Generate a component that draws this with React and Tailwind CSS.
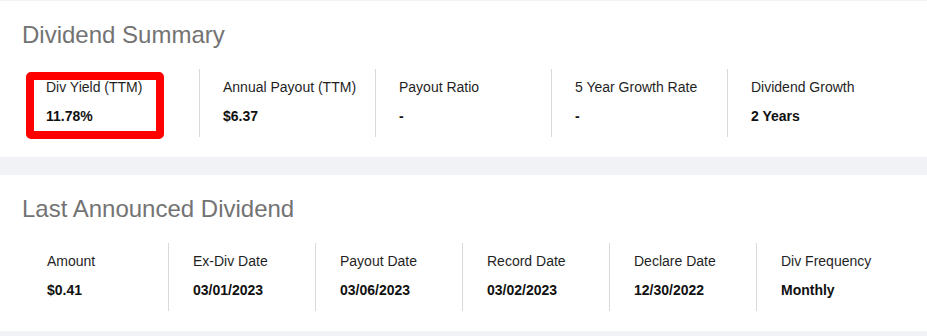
const summary = [
  { label: "Div Yield (TTM)", value: "11.78%", marked: true },
  { label: "Annual Payout (TTM)", value: "$6.37" },
  { label: "Payout Ratio", value: "-" },
  { label: "5 Year Growth Rate", value: "-" },
  { label: "Dividend Growth", value: "2 Years" },
];

const announced = [
  { label: "Amount", value: "$0.41" },
  { label: "Ex-Div Date", value: "03/01/2023" },
  { label: "Payout Date", value: "03/06/2023" },
  { label: "Record Date", value: "03/02/2023" },
  { label: "Declare Date", value: "12/30/2022" },
  { label: "Div Frequency", value: "Monthly" },
];

function Stat({ label, value, first, marked, pad }) {
  return (
    <div
      className={
        "relative h-[68px] pt-[8px] " +
        pad +
        (first ? "" : " border-l border-[#dadada]")
      }
    >
      {marked && (
        <div className="pointer-events-none absolute left-[3px] top-[3px] h-[67px] w-[138px] rounded-[5px] border-[8px] border-[#ff0000]" />
      )}
      <div className="text-[14px] leading-5 text-[#1f1f1f]">{label}</div>
      <div className="mt-[9px] text-[14px] font-bold leading-5 text-[#111]">{value}</div>
    </div>
  );
}

function Card({ title, children }) {
  return (
    <section className="bg-white pt-[18px] pb-[20px]">
      <h2 className="px-[22px] text-[24px] leading-8 text-[#737373]">{title}</h2>
      {children}
    </section>
  );
}

export default function App() {
  return (
    <div
      className="flex min-h-[336px] flex-col gap-[18px] bg-[#f1f2f6] pt-px pb-[5px]"
      style={{ fontFamily: '"Liberation Sans", Arial, sans-serif' }}
    >
      <Card title="Dividend Summary">
        <div className="mt-[18px] grid grid-cols-5 pl-[23px] pr-[24px]">
          {summary.map((s, i) => (
            <Stat key={s.label} {...s} first={i === 0} pad="pl-[23px]" />
          ))}
        </div>
      </Card>
      <Card title="Last Announced Dividend">
        <div className="mt-[18px] grid grid-cols-6 pl-[21px] pr-[24px]">
          {announced.map((s, i) => (
            <Stat
              key={s.label}
              {...s}
              first={i === 0}
              pad={i === 0 ? "pl-[26px]" : "pl-[24px]"}
            />
          ))}
        </div>
      </Card>
    </div>
  );
}
